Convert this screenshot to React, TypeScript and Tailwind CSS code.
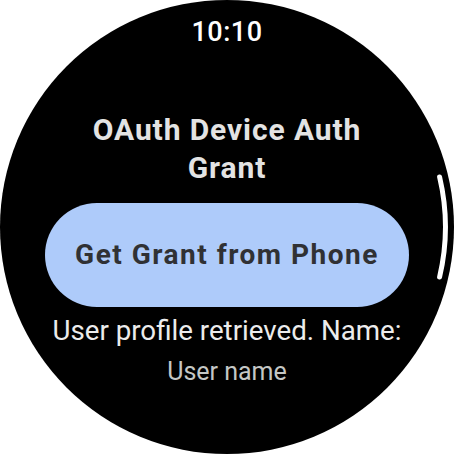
import React from "react";

export default function App() {
  return (
    <div className="w-[454px] h-[454px] bg-white" style={{ fontFamily: "Roboto, 'Noto Sans', sans-serif" }}>
      <div className="relative w-full h-full rounded-full bg-black overflow-hidden flex flex-col items-center">
        <div className="mt-[17px] text-[27px] leading-[30px] font-medium text-white tracking-[0.5px]">10:10</div>
        <div className="mt-[64px] text-center text-[30px] leading-[38px] font-bold text-[#e3e3e3] tracking-[0.9px]">
          OAuth Device Auth
          <br />
          Grant
        </div>
        <button className="mt-[16px] w-[364px] h-[104px] shrink-0 rounded-full bg-[#aecbfa] text-[#303134] text-[28px] font-bold tracking-[1.5px]">
          Get Grant from Phone
        </button>
        <div className="mt-[5px] text-[27.7px] leading-[38px] text-[#ececec] whitespace-nowrap">User profile retrieved. Name:</div>
        <div className="mt-[3px] text-[25px] leading-[38px] text-[#c4c7c5]">User name</div>
        <svg className="absolute inset-0" width="454" height="454" viewBox="0 0 454 454">
          <path
            d="M 439.6 177 A 218 218 0 0 1 439.6 277"
            fill="none"
            stroke="#ffffff"
            strokeWidth="5"
            strokeLinecap="round"
          />
        </svg>
      </div>
    </div>
  );
}
